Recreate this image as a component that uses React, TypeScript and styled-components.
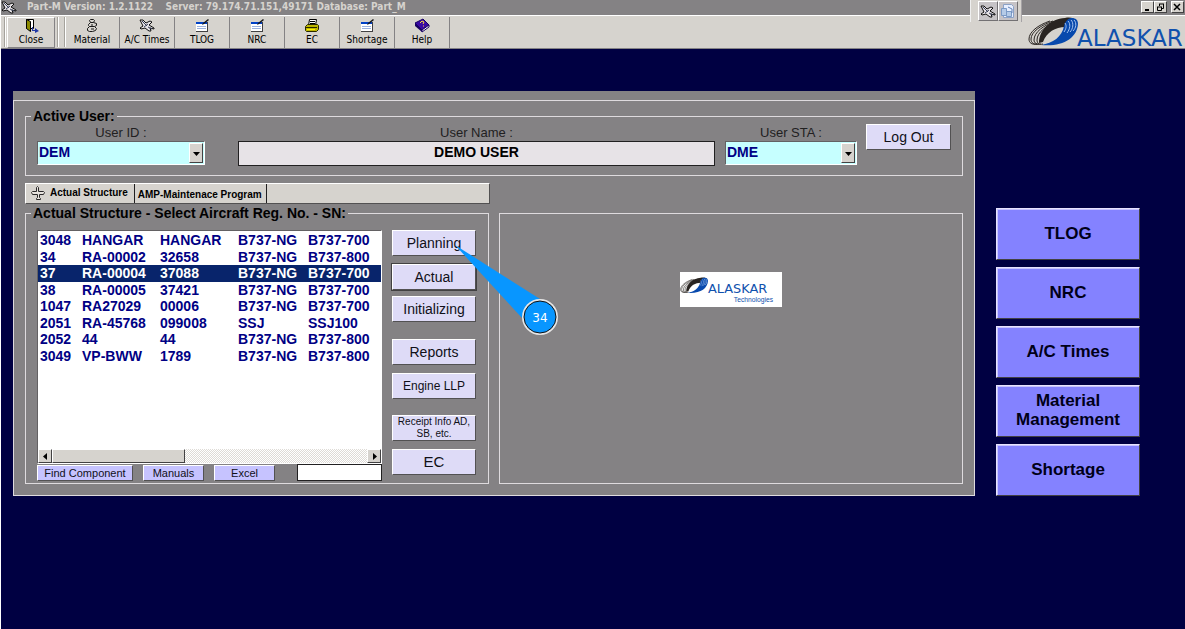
import React from "react";
import styled, { createGlobalStyle, css } from "styled-components";

const GlobalStyle = createGlobalStyle`
  html, body { margin: 0; min-height: 100%; background: #000042; }
  body { font-family: "Liberation Sans", Arial, sans-serif; }
  *, *::before, *::after { box-sizing: border-box; }
  button, input, select { font: inherit; margin: 0; border-radius: 0; }
`;

const uiFont = `"DejaVu Sans Condensed", "DejaVu Sans", sans-serif`;

const raised = css`
  border: 1px solid;
  border-color: #fff #424142 #424142 #fff;
`;

const Screen = styled.div`
  position: relative;
  min-height: 100vh;
  border-left: 1px solid #fff;
  background: #000042;
`;

const TitleBar = styled.header`
  display: flex;
  align-items: center;
  height: 15px;
  padding: 0 1px 1px 0;
  background: #848284;
  color: #d6d3ce;
  font: bold 10px/14px ${uiFont};
  white-space: pre;
`;

const TitleIcon = styled.span`
  display: flex;
  width: 26px;
`;

const TitleText = styled.h1`
  flex: 1;
  margin: 0;
  font: inherit;
`;

const WindowButtons = styled.div`
  display: flex;
`;

const WindowButton = styled.button<{ $apart?: boolean }>`
  ${raised}
  display: flex;
  align-items: center;
  justify-content: center;
  width: 13px;
  height: 12px;
  margin-left: ${(p) => (p.$apart ? 4 : 0)}px;
  padding: 0;
  background: #d6d3ce;
`;

const Toolbar = styled.nav`
  display: flex;
  height: 34px;
  padding: 1px 1px 1px 3px;
  border-top: 1px solid #fff;
  border-bottom: 1px solid #848284;
  background: #d6d3ce;
`;

const Grip = styled.span<{ $gap?: number }>`
  width: 1px;
  margin: 0 ${(p) => p.$gap ?? 2}px 0 0;
  background: #a5a29c;
  box-shadow: 1px 0 #fff;
`;

const ToolButton = styled.button<{ $raised?: boolean }>`
  display: flex;
  flex-direction: column;
  align-items: center;
  width: ${(p) => (p.$raised ? 48 : 55)}px;
  height: 31px;
  margin-right: ${(p) => (p.$raised ? 2 : 0)}px;
  padding: 1px 0 0;
  border: 0;
  border-right: 1px solid #848284;
  background: none;
  color: #000;
  font: 10px/13px ${uiFont};
  ${(p) => p.$raised && css`border: 1px solid; border-color: #fff #848284 #848284 #fff; padding-top: 0;`}
`;

const ToolIcon = styled.span`
  display: flex;
  align-items: center;
  height: 15px;
`;

const LogoSlot = styled.div`
  margin-left: auto;
`;

const FloatBar = styled.div`
  position: absolute;
  top: 0;
  right: 163px;
  display: flex;
  width: 52px;
  height: 22px;
  padding: 1px 2px 0 7px;
  border-left: 1px solid #efefef;
  border-right: 1px solid #a5a2a5;
  background: #d6d3ce;
`;

const FloatButton = styled.button`
  display: flex;
  align-items: center;
  justify-content: center;
  width: 20px;
  height: 20px;
  padding: 0;
  border: 1px solid;
  border-color: #fff #737173 #737173 #fff;
  background: #c6c3c6;
`;

const Main = styled.main`
  display: flex;
  align-items: flex-start;
  gap: 21px;
  padding: 42px 45px 0 12px;
`;

const Panel = styled.section`
  flex: 1;
  min-width: 0;
  border-top: 9px solid #848284;
  background: #848284;
`;

const PanelBody = styled.div`
  padding: 7px 11px 11px;
  border: 1px solid #dedbde;
`;

const Group = styled.fieldset`
  min-width: 0;
  margin: 0;
  border: 1px solid #dedbde;
`;

const Legend = styled.legend`
  margin-left: -6px;
  padding: 0 2px;
  color: #000;
  font: bold 14px/16px "Liberation Sans", Arial, sans-serif;
  white-space: nowrap;
`;

const UserGroup = styled(Group)`
  display: flex;
  align-items: flex-start;
  padding: 0 11px 9px;
`;

const Field = styled.div<{ $width?: number; $gap: number }>`
  display: flex;
  flex-direction: column;
  flex: ${(p) => (p.$width ? `0 0 ${p.$width}px` : "1")};
  min-width: 0;
  margin-right: ${(p) => p.$gap}px;
`;

const FieldLabel = styled.label`
  color: #212021;
  font-size: 13px;
  line-height: 17px;
  text-align: center;
`;

const SelectFrame = styled.div`
  position: relative;
  height: 24px;
  border: 1px solid;
  border-color: #636163 #fff #fff #636163;
`;

const Select = styled.select`
  display: block;
  appearance: none;
  width: 100%;
  height: 100%;
  padding: 0 18px 2px 1px;
  border: 0;
  background: #c6ffff;
  color: #000084;
  font-size: 14px;
  font-weight: bold;
  outline: 0;
`;

const SelectArrow = styled.span`
  ${raised}
  position: absolute;
  top: 1px;
  right: 1px;
  bottom: 1px;
  display: flex;
  align-items: center;
  justify-content: center;
  width: 14px;
  background: #d6d3ce;
  pointer-events: none;
`;

const NameInput = styled.input`
  width: 100%;
  height: 25px;
  padding: 0 0 4px;
  border: 1px solid #212021;
  background: #e7e3e7;
  color: #000;
  font-size: 14px;
  font-weight: bold;
  text-align: center;
`;

const PanelButton = styled.button<{ $size?: number; $gap?: number; $active?: boolean }>`
  position: relative;
  display: block;
  width: 100%;
  height: 26px;
  margin-bottom: ${(p) => p.$gap ?? 8}px;
  padding: 0;
  border: 1px solid;
  border-color: #fff #525152 #525152 #fff;
  box-shadow: ${(p) => (p.$active ? "0 0 0 1px #424142" : "none")};
  background: #dedbf7;
  color: #101018;
  font-size: ${(p) => p.$size ?? 14}px;
  line-height: ${(p) => (p.$size === 10 ? "12px" : "24px")};
`;

const LogOut = styled(PanelButton)`
  flex: 0 0 85px;
  margin-bottom: 0;
`;

const Tabs = styled.div`
  display: flex;
  width: calc(50% - 4px);
  height: 21px;
  margin-top: 7px;
  border: 1px solid;
  border-color: #fff #525152 #525152 #fff;
  background: #d6d3ce;
`;

const Tab = styled.button<{ $active?: boolean }>`
  display: flex;
  align-items: center;
  gap: 4px;
  padding: ${(p) => (p.$active ? "0 6px 1px 4px" : "2px 4px 0 3px")};
  border: 0;
  border-right: 1px solid #212021;
  background: none;
  color: #000;
  font-size: 10px;
  font-weight: bold;
  line-height: 12px;
  white-space: nowrap;
`;

const Columns = styled.div`
  display: grid;
  grid-template-columns: minmax(0, 1fr) minmax(0, 1fr);
  gap: 10px;
  margin-top: 1px;
`;

const StructureGroup = styled(Group)`
  display: flex;
  gap: 10px;
  padding: 9px 12px 2px 11px;
`;

const PreviewGroup = styled(Group)`
  display: flex;
  align-items: flex-start;
  justify-content: center;
  margin-top: 8px;
  padding: 58px 0 0;
`;

const LogoCard = styled.div`
  width: 102px;
  height: 35px;
  background: #fff;
`;

const ListColumn = styled.div`
  flex: 1;
  min-width: 0;
`;

const ListBox = styled.div`
  display: flex;
  flex-direction: column;
  justify-content: space-between;
  height: 234px;
  border: 1px solid;
  border-color: #636163 #fff #fff #636163;
  background: #fff;
`;

const AircraftTable = styled.table`
  width: 100%;
  height: 132px;
  margin-top: 1px;
  border-collapse: collapse;
  table-layout: fixed;
  color: #000084;
  font-size: 14px;
  font-weight: bold;
  line-height: 16px;
`;

const AircraftRow = styled.tr<{ $selected?: boolean }>`
  background: ${(p) => (p.$selected ? "#08246b" : "transparent")};
  color: ${(p) => (p.$selected ? "#fff" : "inherit")};
`;

const Cell = styled.td`
  padding: 0 0 0 2px;
  white-space: nowrap;
`;

const ScrollBar = styled.div`
  display: flex;
  height: 14px;
  background: repeating-conic-gradient(#fff 0 25%, #dedbd6 0 50%) 0 0 / 2px 2px;
`;

const ScrollArrow = styled.button`
  ${raised}
  display: flex;
  align-items: center;
  justify-content: center;
  width: 14px;
  padding: 0;
  background: #d6d3ce;
`;

const ScrollThumb = styled.span`
  ${raised}
  width: 133px;
  margin-right: auto;
  background: #d6d3ce;
`;

const ListActions = styled.div`
  display: flex;
  align-items: flex-end;
  height: 17px;
`;

const SmallButton = styled.button<{ $width: number }>`
  width: ${(p) => p.$width}px;
  height: 16px;
  margin-right: 10px;
  padding: 0;
  border: 1px solid;
  border-color: #fff #525152 #525152 #fff;
  background: #c6c3ff;
  color: #101018;
  font-size: 11px;
  line-height: 14px;
`;

const FindInput = styled.input`
  width: 85px;
  height: 17px;
  margin-left: auto;
  padding: 0 2px;
  border: 1px solid #212021;
  background: #fff;
  font-size: 11px;
`;

const ButtonColumn = styled.div`
  flex: 0 0 84px;
`;

const Callout = styled.svg`
  position: absolute;
  z-index: 2;
  left: 59px;
  top: 11px;
  pointer-events: none;
`;

const SideMenu = styled.nav`
  display: flex;
  flex-direction: column;
  flex: 0 0 144px;
  gap: 7px;
  padding-top: 117px;
`;

const SideButton = styled.button`
  height: 52px;
  padding: 0 10px 2px;
  border: 1px solid;
  border-color: #e7e3ff #424142 #424142 #e7e3ff;
  box-shadow: inset 1px 1px #c6c3ff;
  background: #8482ff;
  color: #000018;
  font-size: 17px;
  font-weight: bold;
  line-height: 19px;
`;

const PlaneIcon = () => (
  <svg width="16" height="13" viewBox="0 0 16 13" aria-hidden="true">
    <path d="M1 1h3l3 3 4-2 2 1-3 3 5 3v1l-4-1 1 3h-2l-4-3-4 1-1-1 3-2z" fill="#e7e3e7" stroke="#101010" />
    <path d="M3 2l5 5M5 8l4-3M9 8l4 2" stroke="#39415a" fill="none" />
  </svg>
);

const DoorIcon = () => (
  <svg width="16" height="15" viewBox="0 0 16 15" aria-hidden="true">
    <path d="M3.500 1.500h7v9h-7z" fill="#fff" stroke="#000" />
    <path d="M3.500 1.500l4 2v10l-4-3z" fill="#8c8a00" stroke="#000" />
    <path d="M10 9v3h2v-2l4 3-4 2v-2H9V9z" fill="#2138a5" />
  </svg>
);

const PartIcon = () => (
  <svg width="16" height="15" viewBox="0 0 16 15" aria-hidden="true" fill="#d6d3ce" stroke="#181818">
    <path d="M6.500 1.500h3l1 1-1 2h-3l-1-2z" />
    <path d="M4.500 6.500l2-2h3l3 1v2l-2 1h-5l-1-1z" />
    <path d="M3.500 10.500l2-2h5l2 2-1 2-3 1h-3l-2-1z" />
    <path d="M7 7h2M7 11h3" fill="none" />
  </svg>
);

const FormIcon = () => (
  <svg width="16" height="15" viewBox="0 0 16 15" aria-hidden="true">
    <rect x="2" y="4" width="12" height="10" fill="#424142" />
    <rect x="2" y="4" width="11" height="9" fill="#fff" />
    <rect x="2" y="4" width="11" height="2" fill="#0041c6" />
    <path d="M3 8.500h9M3 10.500h9" stroke="#9cb2de" />
    <path d="M8 7l1-2 5-4 1 1-5 4z" fill="#181818" />
  </svg>
);

const PrinterIcon = () => (
  <svg width="16" height="15" viewBox="0 0 16 15" aria-hidden="true">
    <path d="M4.500 7.500l1-6h7l-1 6z" fill="#fff" stroke="#000" />
    <path d="M6 3.500h5M6 5.500h5" stroke="#000" />
    <path d="M1.500 8.500l2-2h10l1 1v4l-2 2h-10l-1-1z" fill="#bdb600" stroke="#292800" />
    <path d="M2 9.500h11" stroke="#292800" />
    <path d="M3 11.500h8" stroke="#fff200" />
  </svg>
);

const HelpIcon = () => (
  <svg width="16" height="15" viewBox="0 0 16 15" aria-hidden="true">
    <path d="M1 5l8-4 6 6-7 5z" fill="#3908a5" stroke="#180063" />
    <path d="M1 5l7 7v2L1 8z" fill="#180063" />
    <path d="M8 12l7-5v2l-7 5z" fill="#fff" stroke="#180063" />
    <path d="M6 5l2-2 2 1-1 2M9 8h1" stroke="#ffdf39" fill="none" />
  </svg>
);

const RefreshFormIcon = () => (
  <svg width="16" height="16" viewBox="0 0 16 16" aria-hidden="true" fill="none">
    <path d="M3.500 1.500h8l2 2v11h-10z" fill="#e7efff" stroke="#8ca2c6" />
    <path d="M1.500 5.500h5v7h-5zM6.500 8.500h5v5h-5z" fill="#b5cbe7" stroke="#7b9ac6" />
    <path d="M8 4l4 2v4" stroke="#6382b5" />
  </svg>
);

const CrossPlaneIcon = () => (
  <svg width="16" height="16" viewBox="0 0 16 16" aria-hidden="true">
    <path d="M7.500 1.500l1 1v4h5l1 1-1 2h-4v3l1 1v1h-4v-1l1-1v-3h-5l-1-2 1-1h4v-4z" fill="#e7e3de" stroke="#292829" />
  </svg>
);

const Arrow = ({ d }: { d: string }) => (
  <svg width="7" height="7" viewBox="0 0 7 7" aria-hidden="true">
    <path d={d} fill="#000" />
  </svg>
);

const Logo = ({ width, height, caption }: { width: number; height: number; caption?: boolean }) => (
  <svg
    width={width}
    height={height}
    viewBox={caption ? "0 -9 182 62" : "0 0 156 31"}
    overflow="visible"
    role="img"
    aria-label="Alaskar"
  >
    <path d="M11 26C11 13 22 2 37 1c5-1 9 0 11 2l-8 7c-11-1-21 4-25 15z" fill="#292421" />
    <path d="M13 28c12-2 21-8 23-19 1-4 3-7 7-8 5 0 7 2 7 6-1 14-15 23-37 21z" fill="#0849ad" />
    <g fill="none" stroke="#292421">
      <path d="M22 4C10 8 1 15 1 22c0 4 3 6 8 5" />
      <path d="M25 4C13 8 3 15 3 22c0 4 3 6 8 5" />
      <path d="M28 4C16 8 6 15 6 23c0 3 3 5 7 4" />
      <path d="M31 4C19 8 9 15 9 23c0 3 2 5 6 4" />
    </g>
    <g fill="none" stroke="#a5c3ef">
      <path d="M37 6c2 3 1 6-1 9" />
      <path d="M40 4c3 3 2 8-1 12" />
      <path d="M43 3c3 3 2 9-1 12" />
      <path d="M46 3c3 3 2 8-1 11" />
    </g>
    <text x={caption ? 50 : 49} y="29" fill="#1051ad" fontFamily="DejaVu Sans, sans-serif" fontSize="23">ALASKAR</text>
    {caption && (
      <text x="96" y="44" fill="#1051ad" fontFamily="Liberation Sans, sans-serif" fontSize="12">Technologies</text>
    )}
  </svg>
);

const tools: [string, () => React.JSX.Element][] = [
  ["Material", PartIcon],
  ["A/C Times", PlaneIcon],
  ["TLOG", FormIcon],
  ["NRC", FormIcon],
  ["EC", PrinterIcon],
  ["Shortage", FormIcon],
  ["Help", HelpIcon],
];

const aircraft = [
  ["3048", "HANGAR", "HANGAR", "B737-NG", "B737-700"],
  ["34", "RA-00002", "32658", "B737-NG", "B737-800"],
  ["37", "RA-00004", "37088", "B737-NG", "B737-700"],
  ["38", "RA-00005", "37421", "B737-NG", "B737-700"],
  ["1047", "RA27029", "00006", "B737-NG", "B737-700"],
  ["2051", "RA-45768", "099008", "SSJ", "SSJ100"],
  ["2052", "44", "44", "B737-NG", "B737-800"],
  ["3049", "VP-BWW", "1789", "B737-NG", "B737-800"],
];

const sideItems = ["TLOG", "NRC", "A/C Times", "Material Management", "Shortage"];

const DropDown = ({ id, value }: { id: string; value: string }) => (
  <SelectFrame>
    <Select id={id} defaultValue={value}>
      <option>{value}</option>
    </Select>
    <SelectArrow>
      <Arrow d="M0 2h7L3.500 6z" />
    </SelectArrow>
  </SelectFrame>
);

export default function App() {
  return (
    <Screen>
      <GlobalStyle />
      <TitleBar>
        <TitleIcon><PlaneIcon /></TitleIcon>
        <TitleText>{"Part-M Version: 1.2.1122    Server: 79.174.71.151,49171 Database: Part_M"}</TitleText>
        <WindowButtons>
          <WindowButton aria-label="Minimize">
            <svg width="9" height="8" shapeRendering="crispEdges"><path d="M2 6h4v2H2z" /></svg>
          </WindowButton>
          <WindowButton aria-label="Restore">
            <svg width="9" height="8" fill="none" stroke="#000">
              <path d="M3 1h5M3.500 1v2M7.500 1v4.500H6M1 4h5M1.500 4v3.500h4V4" />
            </svg>
          </WindowButton>
          <WindowButton $apart aria-label="Close window">
            <svg width="9" height="8" stroke="#000" strokeWidth="1.500"><path d="M1 1l6 6M7 1L1 7" /></svg>
          </WindowButton>
        </WindowButtons>
      </TitleBar>
      <Toolbar>
        <Grip />
        <ToolButton $raised><ToolIcon><DoorIcon /></ToolIcon>Close</ToolButton>
        <Grip $gap={6} />
        <Grip $gap={0} />
        {tools.map(([name, Icon]) => (
          <ToolButton key={name}><ToolIcon><Icon /></ToolIcon>{name}</ToolButton>
        ))}
        <LogoSlot><Logo width={156} height={31} /></LogoSlot>
      </Toolbar>
      <FloatBar>
        <FloatButton aria-label="Aircraft"><PlaneIcon /></FloatButton>
        <FloatButton aria-label="Refresh"><RefreshFormIcon /></FloatButton>
      </FloatBar>

      <Main>
        <Panel>
          <PanelBody>
            <UserGroup>
              <Legend>Active User:</Legend>
              <Field $width={168} $gap={33}>
                <FieldLabel htmlFor="user-id">User ID :</FieldLabel>
                <DropDown id="user-id" value="DEM" />
              </Field>
              <Field $gap={10}>
                <FieldLabel htmlFor="user-name">User Name :</FieldLabel>
                <NameInput id="user-name" defaultValue="DEMO USER" />
              </Field>
              <Field $width={132} $gap={9}>
                <FieldLabel htmlFor="user-sta">User STA :</FieldLabel>
                <DropDown id="user-sta" value="DME" />
              </Field>
              <LogOut>Log Out</LogOut>
            </UserGroup>

            <Tabs role="tablist">
              <Tab role="tab" aria-selected="true" $active><CrossPlaneIcon />Actual Structure</Tab>
              <Tab role="tab" aria-selected="false">AMP-Maintenace Program</Tab>
            </Tabs>

            <Columns>
              <StructureGroup>
                <Legend>Actual Structure - Select Aircraft Reg. No. - SN:</Legend>
                <ListColumn>
                  <ListBox>
                    <AircraftTable>
                      <colgroup>
                        <col width="42" />
                        <col width="78" />
                        <col width="78" />
                        <col width="70" />
                        <col />
                      </colgroup>
                      <tbody>
                        {aircraft.map((row) => (
                          <AircraftRow key={row[0]} $selected={row[0] === "37"}>
                            {row.map((value, i) => <Cell key={i}>{value}</Cell>)}
                          </AircraftRow>
                        ))}
                      </tbody>
                    </AircraftTable>
                    <ScrollBar>
                      <ScrollArrow aria-label="Scroll left"><Arrow d="M5 0v7L1 3.500z" /></ScrollArrow>
                      <ScrollThumb />
                      <ScrollArrow aria-label="Scroll right"><Arrow d="M2 0v7l4-3.500z" /></ScrollArrow>
                    </ScrollBar>
                  </ListBox>
                  <ListActions>
                    <SmallButton $width={96}>Find Component</SmallButton>
                    <SmallButton $width={61}>Manuals</SmallButton>
                    <SmallButton $width={61}>Excel</SmallButton>
                    <FindInput aria-label="Search" />
                  </ListActions>
                </ListColumn>
                <ButtonColumn>
                  <PanelButton>
                    Planning
                    <Callout width="110" height="94" viewBox="0 0 110 94">
                      <path d="M3 3l85 54-18 19z" fill="#0896ff" />
                      <circle cx="88" cy="75" r="18" fill="#e7e7e7" />
                      <circle cx="88" cy="75" r="16" fill="#0896ff" stroke="#101010" />
                      <text x="88" y="80" fill="#fff" fontFamily="DejaVu Sans, sans-serif" fontSize="12" textAnchor="middle">34</text>
                    </Callout>
                  </PanelButton>
                  <PanelButton $active $gap={6}>Actual</PanelButton>
                  <PanelButton $gap={17}>Initializing</PanelButton>
                  <PanelButton>Reports</PanelButton>
                  <PanelButton $size={12} $gap={16}>Engine LLP</PanelButton>
                  <PanelButton $size={10}>Receipt Info AD, SB, etc.</PanelButton>
                  <PanelButton $size={15} $gap={0}>EC</PanelButton>
                </ButtonColumn>
              </StructureGroup>
              <PreviewGroup>
                <LogoCard><Logo width={102} height={35} caption /></LogoCard>
              </PreviewGroup>
            </Columns>
          </PanelBody>
        </Panel>

        <SideMenu>
          {sideItems.map((item) => <SideButton key={item}>{item}</SideButton>)}
        </SideMenu>
      </Main>
    </Screen>
  );
}
